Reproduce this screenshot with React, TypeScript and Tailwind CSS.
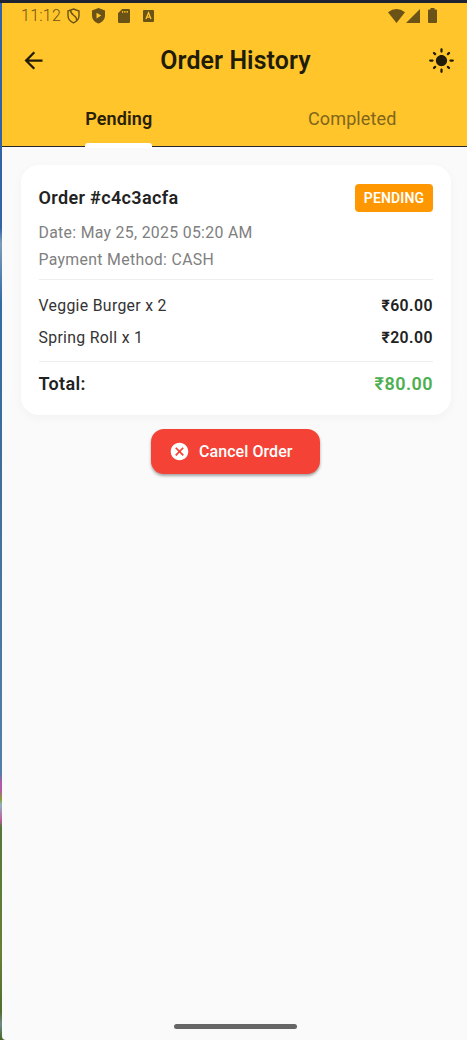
import { MdArrowBack, MdCancel, MdLightMode } from "react-icons/md";

function StatusBar() {
  return (
    <div className="flex h-[25px] items-center pl-[19px] pr-[30px] text-[#6b5216]">
      <span className="w-[46px] text-[16px] font-light leading-[25px] tracking-[0.250px]">11:12</span>
      <svg className="h-[16px] w-[13px]" viewBox="0 0 13 16" fill="none" stroke="currentColor" strokeWidth="1.4">
        <path d="M6.5 1 12 3v4.5c0 3.3-2.2 6-5.500 7.400C3.200 13.500 1 10.800 1 7.500V3z" />
        <path d="M3.800 2.200c-1.200 5.500 6.700 4.500 5.900 10.300" />
      </svg>
      <svg className="ml-[12px] h-[16px] w-[13px]" viewBox="0 0 13 16" fill="currentColor" fillRule="evenodd">
        <path d="M6.500 0 13 2.600v4.900c0 3.700-2.700 6.900-6.500 8C2.700 14.400 0 11.200 0 7.500V2.600zM4.500 4.700v5.800L9.300 7.600z" />
      </svg>
      <svg className="ml-[13px] h-[14px] w-[12px]" viewBox="0 0 12 14" fill="currentColor" fillRule="evenodd">
        <path d="M4.200 0H10.800Q12 0 12 1.200V12.800Q12 14 10.800 14H1.200Q0 14 0 12.800V4.200zM4 2v1.800h1.200V2zm2.300 0v1.800h1.200V2zm2.300 0v1.800h1.200V2z" />
      </svg>
      <svg className="ml-[13px] h-[12px] w-[11px]" viewBox="0 0 11 12" fill="currentColor">
        <rect width="11" height="12" rx="1" />
        <path d="M3 9 5.500 2.800 8 9M4 7.200h3" fill="none" stroke="#ffc52b" strokeWidth="1.300" />
      </svg>
      <div className="ml-auto flex items-center">
        <svg className="h-[14px] w-[17px]" viewBox="0 0 17 14" fill="currentColor">
          <path d="M0 3.200Q8.500-3 17 3.200L8.500 14z" />
        </svg>
        <svg className="ml-[1px] h-[14px] w-[14px]" viewBox="0 0 14 14" fill="currentColor">
          <path d="M0 14 14 0V14z" />
        </svg>
        <svg className="ml-[8px] h-[15px] w-[9px]" viewBox="0 0 9 15" fill="currentColor">
          <path d="M2.500 0h4v1.500H8q1 0 1 1V14q0 1-1 1H1q-1 0-1-1V2.500q0-1 1-1h1.500z" />
        </svg>
      </div>
    </div>
  );
}

function Header() {
  return (
    <header className="h-[144px] shrink-0 border-b border-[#28272b] bg-[#ffc52b]">
      <StatusBar />
      <div className="grid h-[65px] grid-cols-[27px_1fr_27px] items-center pl-[18px] pr-[12px] text-[#211c07]">
        <MdArrowBack className="size-[27px]" />
        <h1 className="pr-[4px] pt-[1px] text-center text-[24.900px] font-semibold leading-none tracking-[0.100px]">Order History</h1>
        <MdLightMode className="size-[27px]" />
      </div>
      <nav className="grid h-[54px] grid-cols-2 text-[18px]">
        <div className="flex justify-center">
          <div className="flex h-[54px] flex-col items-center">
            <span className="h-[47px] pl-px pt-[12px] font-semibold leading-[28px] tracking-[0.120px] text-[#282108]">Pending</span>
            <span className="h-[5px] w-[67px] shrink-0 translate-y-[3px] rounded-t-[3px] bg-white" />
          </div>
        </div>
        <div className="flex justify-center pl-[3px] pt-[12px] leading-[28px] tracking-[0.120px] text-[#80651b]">Completed</div>
      </nav>
    </header>
  );
}

const items = [
  { name: "Veggie Burger x 2", price: "₹60.00" },
  { name: "Spring Roll x 1", price: "₹20.00" },
];

function OrderCard() {
  return (
    <section className="ml-[18.500px] mr-[16px] mt-[18px] h-[250px] shrink-0 rounded-[18px] bg-white pl-[18px] pr-[18px] pt-[19px] text-[15.800px] text-[#333] shadow-[0_3px_11px_rgba(0,0,0,0.035)]">
      <div className="flex items-center justify-between">
        <h2 className="text-[18px] font-semibold leading-[28px] tracking-[0.350px] text-[#222]">Order #c4c3acfa</h2>
        <span className="flex h-[28px] w-[78px] items-center justify-center rounded-[4px] bg-[#ff9800] pt-px text-[14px] font-semibold tracking-[0.150px] text-white">PENDING</span>
      </div>
      <p className="mt-[7px] leading-[27px] tracking-[0.320px] text-[#808080]">Date: May 25, 2025 05:20 AM</p>
      <p className="leading-[27px] tracking-[0.340px] text-[#808080]">Payment Method: CASH</p>
      <div className="mt-[6px] flex h-[83px] flex-col border-y border-[#eee] pt-[10px]">
        {items.map((item) => (
          <div key={item.name} className="flex h-[32px] shrink-0 items-center justify-between">
            <span className="tracking-[0.320px]">{item.name}</span>
            <span className="font-semibold tracking-[0.450px] text-[#222]">{item.price}</span>
          </div>
        ))}
      </div>
      <div className="flex h-[43px] items-center justify-between text-[18px] font-semibold tracking-[0.350px]">
        <span className="text-[#222]">Total:</span>
        <span className="tracking-[0.450px] text-[#4caf50]">₹80.00</span>
      </div>
    </section>
  );
}

export default function App() {
  return (
    <div className="flex h-[1040px] w-[467px] flex-col bg-[#1d2330] pt-[3px] font-[Roboto,sans-serif]">
      <div className="flex flex-1 bg-[linear-gradient(to_bottom,#3264a5_0px,#3264a5_225px,#7d9cba_240px,#326ba5_300px,#416d99_460px,#527eaa_770px,#b459a4_780px,#b459a4_787px,#8b9b32_796px,#92b0c2_802px,#bd5d9d_817px,#55763c_824px,#687f36_950px,#526d30_1009px,#708b8a_1021px,#466522_1037px)] pl-[2px]">
        <main className="flex w-[465px] flex-col overflow-hidden rounded-bl-[4px] bg-[#fafafa]">
          <Header />
          <OrderCard />
          <button className="ml-[149px] mt-[14px] flex h-[45px] w-[169px] shrink-0 items-center rounded-[13px] bg-[#f44336] pl-[18px] text-[16px] font-medium tracking-[0.070px] text-white shadow-[0_2px_3px_rgba(0,0,0,0.35)]">
            <MdCancel className="mr-[9px] size-[21px]" />
            Cancel Order
          </button>
          <div className="mb-[11px] ml-[172px] mt-auto h-[5px] w-[123px] rounded-full bg-[#666]" />
        </main>
      </div>
    </div>
  );
}
